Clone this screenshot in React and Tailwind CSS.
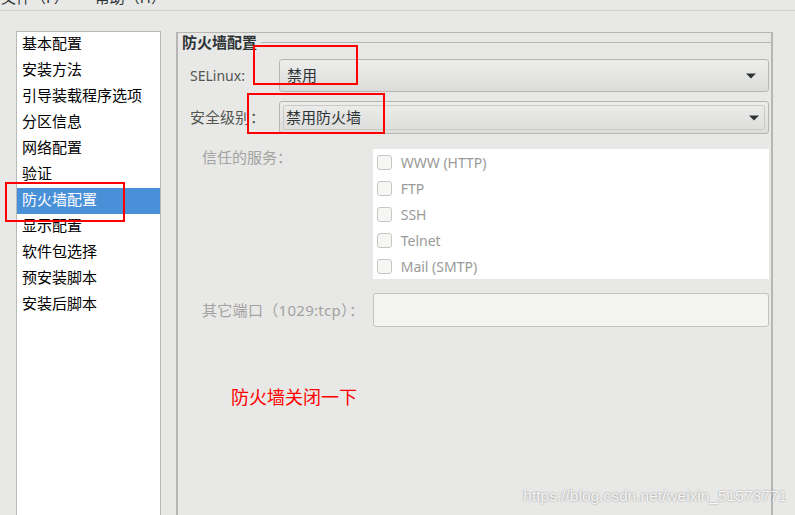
import React from "react";

const sections = [
  "基本配置",
  "安装方法",
  "引导装载程序选项",
  "分区信息",
  "网络配置",
  "验证",
  "防火墙配置",
  "显示配置",
  "软件包选择",
  "预安装脚本",
  "安装后脚本",
];

const services = ["WWW (HTTP)", "FTP", "SSH", "Telnet", "Mail (SMTP)"];

const FONT = "font-['Noto_Sans','Noto_Sans_CJK_SC',sans-serif]";

function Arrow() {
  return (
    <svg width="10" height="6" viewBox="0 0 10 6" className="shrink-0">
      <path d="M0 0.5 H10 L5 5.5 Z" fill="#2e3436" />
    </svg>
  );
}

function Combo({ value, focused }) {
  return (
    <div className="flex-1 h-[33px] rounded-[3px] border border-[#b6b6b4] bg-gradient-to-b from-[#ededec] to-[#dcdcdb] flex">
      {focused ? (
        <div className="flex-1 m-[3px] rounded-[2px] border border-[#c9c9c8] flex items-center pl-[2px] pr-[5px]">
          <span className="flex-1 text-[15px] text-[#2e3436]">{value}</span>
          <Arrow />
        </div>
      ) : (
        <div className="flex-1 flex items-center pl-[7px] pr-[12px]">
          <span className="flex-1 text-[15px] text-[#2e3436]">{value}</span>
          <Arrow />
        </div>
      )}
    </div>
  );
}

export default function App() {
  return (
    <div className={`relative w-[795px] h-[515px] overflow-hidden bg-[#e8e8e7] ${FONT}`}>
      {/* menu bar, scrolled mostly out of view */}
      <div className="h-[11px] border-b border-[#d2d2d1] overflow-hidden">
        <div className="-mt-[13px] flex gap-[26px] pl-[1px] text-[15px] leading-[20px] text-[#2e3436]">
          <span>文件（F）</span>
          <span>帮助（H）</span>
        </div>
      </div>

      <div className="flex pt-[20px] pl-[16px]">
        {/* section list */}
        <div className="w-[145px] h-[600px] bg-white border-l border-t border-r border-[#b9b9b7]">
          {sections.map((s, i) => (
            <div
              key={s}
              className={`h-[26px] flex items-center pl-[5px] pb-[3px] text-[15px] ${
                i === 6 ? "bg-[#4a90d9] text-white" : "text-black"
              }`}
            >
              {s}
            </div>
          ))}
        </div>

        {/* firewall frame */}
        <div className="ml-[15px] mt-[1px] w-[597px] h-[600px] border-t border-l-2 border-r-2 border-[#b6b6b4]">
          <div className="flex items-start">
            <div className="pl-[4px] pr-[4px] h-[18px] leading-[18px] text-[15px] font-bold text-[#2e3436]">
              防火墙配置
            </div>
            <div className="flex-1 h-[10px] border-b border-[#b6b6b4]" />
          </div>

          <div className="pl-[12px] pr-[2px]">
            <div className="flex items-center mt-[8px]">
              <div className="w-[89px] text-[14px] text-[#555753]">SELinux:</div>
              <Combo value="禁用" />
            </div>
            <div className="flex items-center mt-[9px]">
              <div className="w-[89px] text-[15px] text-[#555753]">安全级别：</div>
              <Combo value="禁用防火墙" focused />
            </div>

            <div className="flex mt-[15px] pl-[12px]">
              <div className="w-[171px] pt-[1px] text-[15px] leading-[14px] text-[#a3a3a1]">
                信任的服务：
              </div>
              <div className="w-[397px] h-[130px] bg-white">
                {services.map((s) => (
                  <div key={s} className="h-[26px] flex items-center pl-[4px]">
                    <div className="w-[15px] h-[15px] rounded-[3px] border border-[#c6c6c4] bg-[#f6f6f5]" />
                    <span className="ml-[9px] text-[14px] text-[#9a9a98]">{s}</span>
                  </div>
                ))}
              </div>
            </div>

            <div className="flex items-center mt-[14px] pl-[12px]">
              <div className="w-[171px] text-[15px] tracking-[0.3px] text-[#a3a3a1]">其它端口（1029:tcp）：</div>
              <div className="w-[397px] h-[34px] rounded-[3px] border border-[#c4c4c2] bg-[#f3f3f2]" />
            </div>

            <div className="mt-[58px] pl-[41px] text-[18px] leading-[24px] text-[#ff0000]">
              防火墙关闭一下
            </div>
          </div>
        </div>
      </div>

      {/* annotation boxes */}
      <div className="absolute left-[5px] top-[182px] w-[120px] h-[40px] border-2 border-[#ff0000]" />
      <div className="absolute left-[253px] top-[45px] w-[105px] h-[40px] border-2 border-[#ff0000]" />
      <div className="absolute left-[247px] top-[93px] w-[138px] h-[41px] border-2 border-[#ff0000]" />

      <div className="absolute right-[8px] bottom-[10px] text-[15.5px] leading-[18px] font-['Liberation_Sans',sans-serif] text-white/90 [text-shadow:0_0_2px_rgba(0,0,0,0.45)]">
        https://blog.csdn.net/weixin_51573771
      </div>
    </div>
  );
}
